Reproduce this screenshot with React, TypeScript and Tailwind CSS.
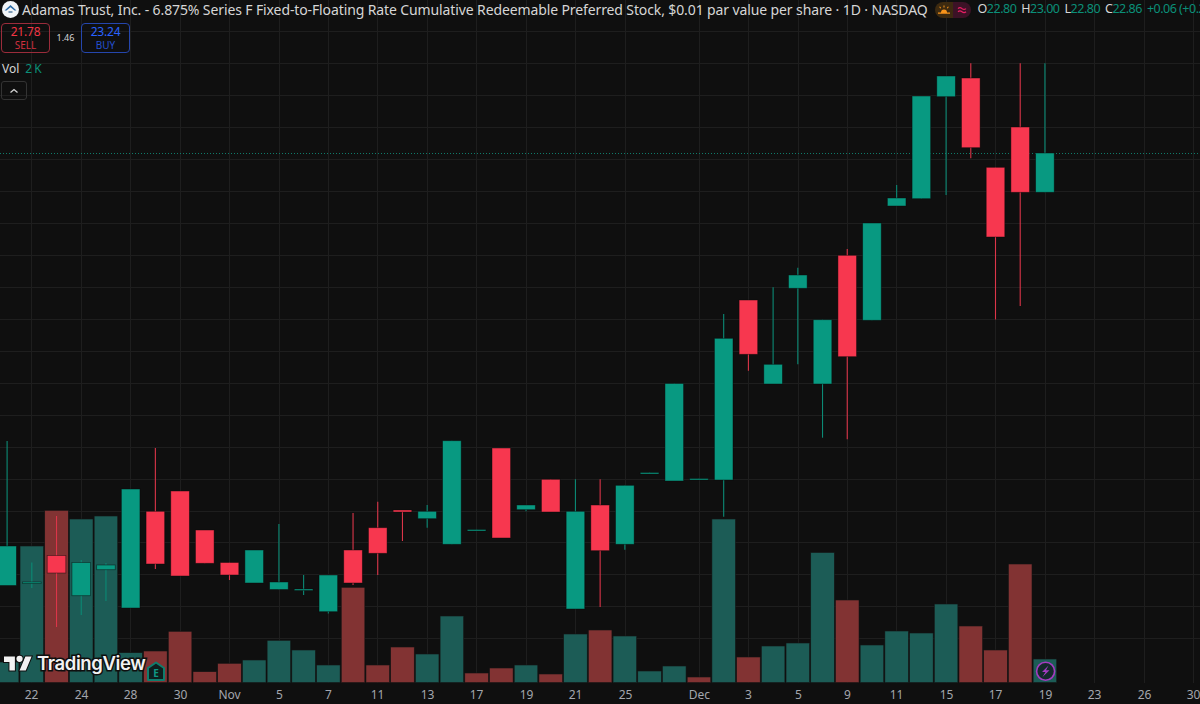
const GREEN = '#089981';
const RED = '#f7374f';

// wick top, wick bottom, body top, body bottom
const candles: [number, number, number, number, 'g' | 'r'][] = [
  [441, 585, 546, 585.5, 'g'],
  [562.5, 588, 582, 583.5, 'g'],
  [516, 627, 555.5, 573, 'r'],
  [560, 615, 562.5, 595.7, 'g'],
  [563, 601, 565, 569.7, 'g'],
  [489, 608, 489, 608, 'g'],
  [448, 569, 511.3, 564, 'r'],
  [491, 576, 491, 576, 'r'],
  [530, 563.3, 530, 563.3, 'r'],
  [562.5, 580, 562.5, 575, 'r'],
  [550, 583, 550, 583, 'g'],
  [524, 589.5, 582, 589.5, 'g'],
  [575, 595, 589, 590.5, 'g'],
  [575, 613.5, 575, 611.7, 'g'],
  [513, 585, 550, 583, 'r'],
  [501.7, 575, 527.7, 553.3, 'r'],
  [510, 541, 510, 512, 'r'],
  [505, 527.7, 511.3, 518.7, 'g'],
  [440.7, 544.3, 440.7, 544.3, 'g'],
  [529.5, 531, 529.5, 531, 'g'],
  [448, 538, 448, 538, 'r'],
  [505, 511.3, 505, 509.7, 'g'],
  [479.3, 512, 479.3, 512, 'r'],
  [479.3, 609, 511.3, 609, 'g'],
  [479.3, 607, 505, 550.7, 'r'],
  [485.3, 549.7, 485.3, 544.3, 'g'],
  [472.5, 474, 472.5, 474, 'g'],
  [383.5, 481, 383.5, 481, 'g'],
  [478.5, 480, 478.5, 480, 'g'],
  [314, 516.7, 338.3, 480, 'g'],
  [300, 370.7, 300, 354.3, 'r'],
  [287.3, 384, 364.3, 384, 'g'],
  [267.7, 364.3, 275, 288.3, 'g'],
  [319.7, 437.7, 319.7, 384, 'g'],
  [249, 439.3, 255.3, 356.7, 'r'],
  [223, 320.3, 223, 320.3, 'g'],
  [185, 206, 198, 206, 'g'],
  [96, 198.7, 96, 198.7, 'g'],
  [76, 195, 76, 96.7, 'g'],
  [63.3, 158.3, 78, 147.7, 'r'],
  [167.3, 319.5, 167.3, 237, 'r'],
  [63.3, 306, 127, 192.3, 'r'],
  [63.3, 192.3, 153, 192.3, 'g'],
];

const volumes: [number, 'g' | 'r'][] = [
  [662, 'g'], [546, 'g'], [510.3, 'r'], [519, 'g'], [516, 'g'], [652.7, 'g'], [651, 'r'], [631.3, 'r'],
  [671.7, 'r'], [663.3, 'r'], [660, 'g'], [640.3, 'g'], [650, 'g'], [665, 'g'], [587.3, 'r'], [665, 'r'],
  [647, 'r'], [654, 'g'], [616, 'g'], [673, 'r'], [668, 'r'], [665, 'g'], [674, 'r'], [634, 'g'],
  [630, 'r'], [636, 'g'], [671, 'g'], [666, 'g'], [677, 'r'], [519, 'g'], [657, 'r'], [646, 'g'],
  [643, 'g'], [552.5, 'g'], [600, 'r'], [645, 'g'], [631, 'g'], [633, 'g'], [604, 'g'], [626, 'r'],
  [650, 'r'], [564, 'r'], [659, 'g'],
];

const ticks: [number, string][] = [
  [31.5, '22'], [81.5, '24'], [130.5, '28'], [180.5, '30'], [229.5, 'Nov'], [279.5, '5'], [328.5, '7'], [377.5, '11'],
  [427.5, '13'], [476.5, '17'], [526.5, '19'], [575.5, '21'], [625.5, '25'], [699.5, 'Dec'], [748.5, '3'], [798.5, '5'],
  [847.5, '9'], [896.5, '11'], [946.5, '15'], [995.5, '17'], [1045.5, '19'], [1094.5, '23'], [1144.5, '26'], [1193.5, '30'],
];

const centerX = (i: number) => 7.1 + 24.71 * i;
const gridRows = Array.from({ length: 20 }, (_, k) => Math.floor(31.6 + 31.96 * k) + 0.5);

function Chart() {
  return (
    <svg width={1200} height={704} viewBox="0 0 1200 704" className="block">
      {ticks.map(([x, label]) => (
        <line key={label + x} x1={x} x2={x} y1={0} y2={683} stroke="#1e1e1e" />
      ))}
      {gridRows.map((y) => (
        <line key={y} x1={0} x2={1200} y1={y} y2={y} stroke="#1e1e1e" />
      ))}

      {volumes.map(([top, c], i) => (
        <rect
          key={i}
          x={centerX(i) - 11.8}
          y={top}
          width={23.6}
          height={682.6 - top}
          fill={c === 'g' ? '#1c5c56' : '#823333'}
          stroke="#141414"
          strokeWidth={0.6}
        />
      ))}

      <line x1={0} x2={1200} y1={153.5} y2={153.5} stroke="#0f7a69" strokeDasharray="1 2" />

      {candles.map(([wt, wb, bt, bb, c], i) => {
        const x = centerX(i);
        const color = c === 'g' ? GREEN : RED;
        return (
          <g key={i}>
            <line x1={x} x2={x} y1={wt} y2={wb} stroke={c === 'g' ? '#0b8a75' : '#dc3549'} strokeWidth={1.1} />
            <rect x={x - 9.3} y={bt} width={18.6} height={bb - bt} fill={color} stroke="#0a0a0a" strokeOpacity={0.55} strokeWidth={0.8} />
          </g>
        );
      })}

      {/* earnings marker */}
      <path d="M148 668 L156 662.5 L164 668 V680 H148 Z" fill="#0e1f1e" stroke="#0e7d6d" strokeWidth={2} strokeLinejoin="round" />
      <text x={156} y={677} textAnchor="middle" fontSize={10} fontWeight={700} fill="#0f9a85" fontFamily="Noto Sans, sans-serif">E</text>

      {/* lightning marker */}
      <circle cx={1045.6} cy={671.3} r={9} fill="#14292b" stroke="#a53cc2" strokeWidth={1.6} />
      <path d="M1048.5 665.5 L1042 672 H1045.5 L1042.5 677 L1049.5 670.3 H1046 Z" fill="#a53cc2" />

      {ticks.map(([x, label]) => (
        <text key={label + x} x={x} y={699} textAnchor="middle" fontSize={12} fill="#a3a6ad" fontFamily="Noto Sans, sans-serif">
          {label}
        </text>
      ))}
    </svg>
  );
}

function Legend() {
  return (
    <div className="absolute left-0 top-0 w-full overflow-hidden font-['Noto_Sans',sans-serif]">
      <div className="flex h-[19px] items-center whitespace-nowrap pl-[2px]">
        <svg width={17} height={17} viewBox="0 0 17 17" className="shrink-0">
          <circle cx={8.5} cy={8.5} r={8.5} fill="#f2f5f8" />
          <path d="M2.5 9.5 L8.5 4 L14.5 9.5 L12.5 9.5 L8.5 6.2 L4.5 9.5 Z" fill="#2c6ba6" />
          <path d="M6.5 10 H10.5 V12 H6.5 Z" fill="#7f9db8" />
        </svg>
        <span className="ml-[3px] text-[14px] tracking-[-0.115px] text-[#d6d6d6]">
          Adamas Trust, Inc. - 6.875% Series F Fixed-to-Floating Rate Cumulative Redeemable Preferred Stock, $0.01 par value per share · 1D · NASDAQ
        </span>
        <div className="ml-[7px] flex h-4 w-9 shrink-0 overflow-hidden rounded-full">
          <div className="flex w-[18px] items-center justify-center bg-[#3d2a10]">
            <svg width={12} height={10} viewBox="0 0 12 10">
              <path d="M3 7.5a3 3 0 0 1 6 0Z M0 7.6h12v1.2H0Z M5.5 0.5h1v2h-1Z M1.2 2l.8-.6 1.2 1.6-.8.6Z M10.8 2l-.8-.6-1.2 1.6.8.6Z" fill="#f7931a" />
            </svg>
          </div>
          <div className="flex w-[18px] items-center justify-center bg-[#3c1226]">
            <svg width={10} height={8} viewBox="0 0 10 8" fill="none" stroke="#e91e63" strokeWidth={1.2}>
              <path d="M1 2.6c1.5-1.4 2.6-1.2 4 0s2.500 1.400 4 0" />
              <path d="M1 5.800c1.500-1.400 2.600-1.200 4 0s2.500 1.400 4 0" />
            </svg>
          </div>
        </div>
        <div className="ml-[7px] flex shrink-0 gap-[5px] text-[12.5px] tracking-[-0.5px] text-[#0b8f79]">
          <span><span className="text-[#d6d6d6]">O</span>22.80</span>
          <span><span className="text-[#d6d6d6]">H</span>23.00</span>
          <span><span className="text-[#d6d6d6]">L</span>22.80</span>
          <span><span className="text-[#d6d6d6]">C</span>22.86</span>
          <span>+0.06 (+0.26%)</span>
        </div>
      </div>

      <div className="mt-1 flex items-center pl-[1px]">
        <div className="flex h-[30px] w-[49px] flex-col items-center justify-center rounded border border-[#9b2c3b] leading-none">
          <span className="text-[12px] leading-[14px] tracking-[-0.2px] text-[#f23645]">21.78</span>
          <span className="text-[10px] leading-[12px] text-[#d1303f]">SELL</span>
        </div>
        <span className="w-[31px] text-center text-[9px] text-[#d6d6d6]">1.46</span>
        <div className="flex h-[30px] w-[49px] flex-col items-center justify-center rounded border border-[#2546ad] leading-none">
          <span className="text-[12px] leading-[14px] tracking-[-0.2px] text-[#2962ff]">23.24</span>
          <span className="text-[10px] leading-[12px] text-[#2450d0]">BUY</span>
        </div>
      </div>

      <div className="mt-2 flex items-center pl-[2px] text-[12px] leading-[16px]">
        <span className="text-[#d6d6d6]">Vol</span>
        <span className="ml-[6px] tracking-[-0.5px] text-[#0b8f79]">2 K</span>
      </div>

      <div className="ml-[1px] mt-1 flex h-[19px] w-[26px] items-center justify-center rounded-[3px] border border-[#333333]">
        <svg width={10} height={6} viewBox="0 0 10 6" fill="none" stroke="#d6d6d6" strokeWidth={1.3}>
          <path d="M1.500 4.500 L5 1.500 L8.500 4.500" />
        </svg>
      </div>
    </div>
  );
}

function Watermark() {
  return (
    <div className="absolute left-[4px] top-[652px] flex items-center gap-[5px]">
      <svg width={28} height={15} viewBox="0 3.500 36 19" className="overflow-visible">
        <g fill="#f2f2f2" stroke="#0f0f0f" strokeWidth={2.500} paintOrder="stroke">
          <path d="M14 22H7V11H0V4h14v18zM28 22h-8l7.500-18h8L28 22z" />
          <circle cx={20} cy={7} r={4} />
        </g>
      </svg>
      <span className="font-['Inter',sans-serif] text-[18.5px] font-semibold leading-[22px] tracking-[-0.4px] text-[#f2f2f2] [paint-order:stroke] [-webkit-text-stroke:3px_#0f0f0f]">
        TradingView
      </span>
    </div>
  );
}

export default function App() {
  return (
    <div className="relative h-[704px] w-[1200px] overflow-hidden bg-[#0f0f0f]">
      <Chart />
      <Legend />
      <Watermark />
    </div>
  );
}
